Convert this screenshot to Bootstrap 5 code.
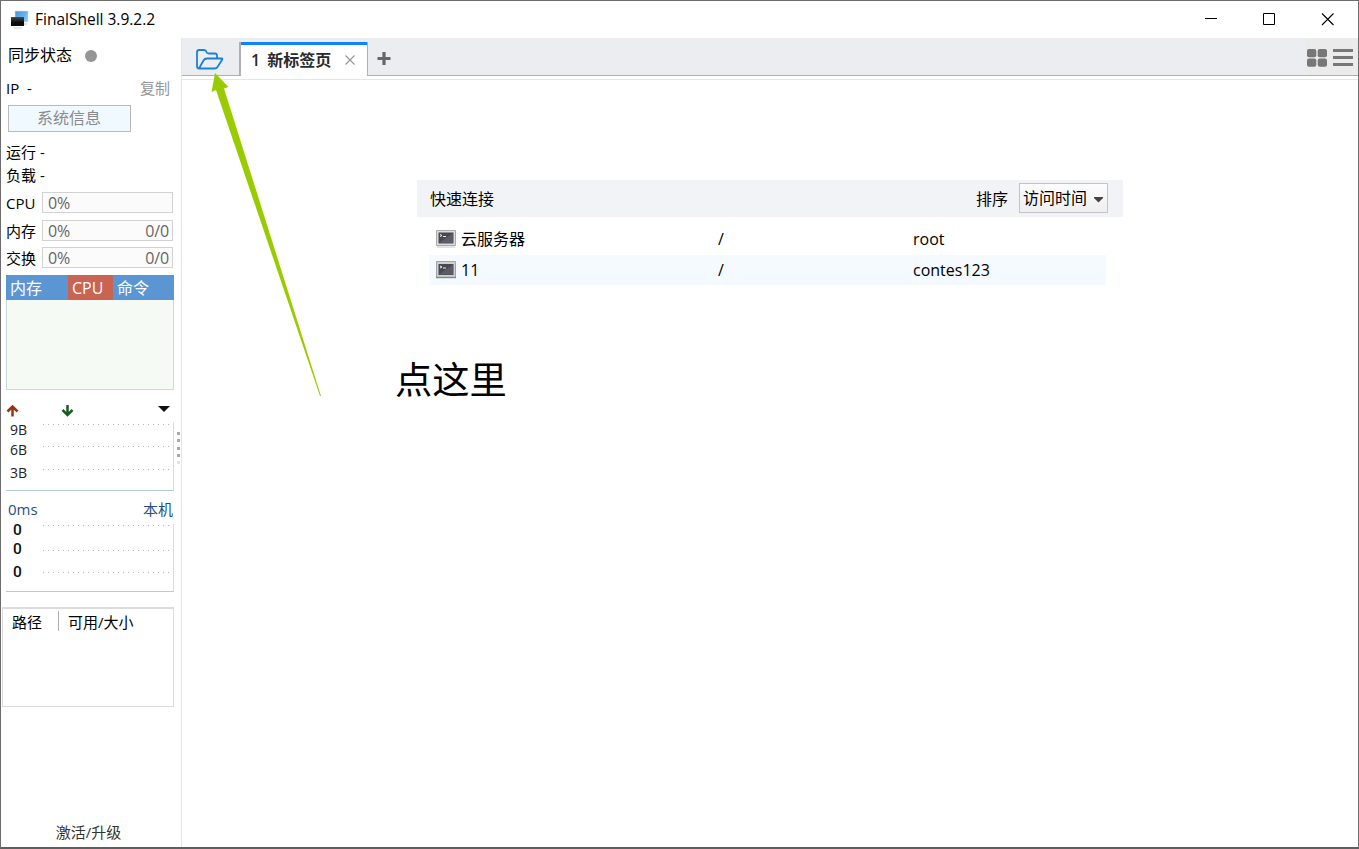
<!DOCTYPE html>
<html lang="zh-CN">
<head>
<meta charset="utf-8">
<title>FinalShell 3.9.2.2</title>
<link rel="stylesheet" href="https://cdn.jsdelivr.net/npm/bootstrap@5.3.0/dist/css/bootstrap.min.css">
<style>
body{height:849px;overflow:hidden;background:#fff;color:#000;font:16px/20px "Open Sans","Noto Sans CJK SC",sans-serif}
svg{display:block;flex:none}
.window{height:849px;border:1px solid #6e6c6d;border-bottom:2px solid #5f5f5f}
.titlebar{height:37px;padding-left:9px}
.app-name{font-size:15.5px;margin:-1px 0 0 6px}
.win-buttons{gap:45px;padding-right:24px}
.side{width:181px;flex:none;border-right:1px solid #e6e6e6;font-size:15px}
.sync{height:36px;padding:0 0 1px 7px;font-size:16px}
.sync-text{margin-top:-1px}
.sync-dot{width:12px;height:12px;background:#969696;margin-left:13px}
.ip-row{height:30px;padding:0 11px 2px 5px;font-size:15px}
.copy{color:#969696}
.sys-btn{width:123px;height:27px;margin:1px 0 9px 7px;padding:0 1px 0 0;border:1px solid #bababa;border-radius:0;background:#f0f9ff;color:#8a8a8a;font-size:16px;line-height:23px}
.info-line{height:23px;padding:0 0 2px 5px}
.meter-row{height:21px;padding-left:5px}
.meter-name{width:36px;flex:none;white-space:nowrap}
.meter{width:131px;height:21px;border:1px solid #d2d2d2;background:#fbfbfb;color:#666;padding:0 3px 0 5px;font-size:16px;line-height:20px;letter-spacing:-.1px}
.proc{width:168px;height:115px;margin:7px 0 0 5px;border:1px solid #c7dbe5;border-top:0;background:#f5faf5}
.proc-head{height:25px;margin:0 -1px;background:#5b95d3;color:#fff;font-size:16px;line-height:26px}
.proc-head>span{padding-left:4px}
.net-head{height:32px;padding:10px 11px 0 5px}
.chart{width:168px;height:69px;margin-left:5px;border-right:1px solid #d2dee3;border-bottom:1px solid #b5cdd6}
.chart-labels{width:36px;padding-left:4px;font-size:14px;color:#222;flex:none}
.ping-head{height:33px;padding:8px 8px 0 7px;color:#1f4f86;font-size:15px}
.ping .chart-labels{font-family:Roboto,sans-serif;font-weight:500;font-size:15.5px;color:#111}
.disk{width:172px;height:100px;margin:15px 0 0 1px;border:1px solid #dcdcdc;border-top-width:2px;padding:2px 0 0 9px;line-height:22px}
.disk-sep{width:1px;height:20px;background:#b0b0b0;margin:0 9px 0 16px}
.upgrade{height:25px;margin-right:5px;color:#333}
.grip{left:176px;top:427px}
.tabstrip{height:38px;background:#ecedf1;border-bottom:1px solid #b0b0b0}
.home-tab{width:57px;padding-left:13px;padding-top:5px}
.page-tab{width:129px;height:34px;margin-bottom:-1px;background:#fff;border:solid #b0b0b0;border-width:0 1px 0 1px;border-left-width:2px;box-shadow:inset 0 3px #0a84ff;padding:1px 12px 0 10px;font-weight:600;color:#2b2b2b;white-space:nowrap;word-spacing:3px}
.tools{width:52px;background:#ebebeb;padding:2px 5px 0 1px}
.workspace{margin-top:3px;border-top:1px solid #e6e6e6;padding:100px 0 0 235px}
.quick-head{width:706px;height:37px;background:#f2f3f7;padding:0 15px 1px 13px}
.sort-box{width:89px;height:30px;border:1px solid #c3c3c3;background:linear-gradient(#fcfcfc,#efefef);padding:0 4px 0 3px;margin-left:11px;line-height:29px}
.host{width:677px;margin-left:12px;padding-left:7px}
.host-name{width:262px;padding-left:5px}
.host-path{width:195px}
.arrow-note{left:204px;top:72px;pointer-events:none}
.note-text{left:394px;top:354px;font-size:37.3px;line-height:50px}
</style>
</head>
<body>
<div class="window position-relative d-flex flex-column">
 <header class="titlebar d-flex align-items-center">
  <svg width="19" height="20" viewBox="0 0 19 20"><defs><linearGradient id="scr" x2="1" y2="1"><stop stop-color="#3e93dc"/><stop offset="1" stop-color="#91cdf8"/></linearGradient><linearGradient id="blk" x2="0" y2="1"><stop stop-color="#454d55"/><stop offset=".6" stop-color="#0b0b0b"/></linearGradient></defs><path d="M5 1h13v11H5z" fill="url(#scr)" stroke="#d8e2ea" stroke-width=".6"/><path d="M12 13h5v2h-5z" fill="#ddd"/><path d="M1 7h13v9H1z" fill="url(#blk)"/><path d="M3 18h9" stroke="#d0d0d0"/></svg>
  <span class="app-name">FinalShell 3.9.2.2</span>
  <div class="win-buttons ms-auto d-flex align-items-center">
   <svg width="13" height="13" viewBox="0 0 13 13"><path d="M0 5.500h12" stroke="#000"/></svg>
   <svg width="13" height="13" viewBox="0 0 13 13"><path d="M.5.5h11v11H.5z" fill="none" stroke="#000"/></svg>
   <svg width="13" height="13" viewBox="0 0 13 13"><path d="M1 .5l11.500 11.500M12.500 .5l-11.500 11.500" stroke="#000" stroke-width="1.1"/></svg>
  </div>
 </header>
 <div class="d-flex flex-fill">
  <aside class="side d-flex flex-column">
   <div class="sync d-flex align-items-center"><span class="sync-text">同步状态</span><span class="sync-dot rounded-circle"></span></div>
   <div class="ip-row d-flex align-items-center"><span>IP&nbsp; -</span><span class="copy ms-auto">复制</span></div>
   <button class="sys-btn btn">系统信息</button>
   <div class="info-line d-flex align-items-center">运行 -</div>
   <div class="info-line d-flex align-items-center">负载 -</div>
   <div class="meter-row d-flex align-items-center" style="margin-top:5px"><span class="meter-name">CPU</span><div class="meter">0%</div></div>
   <div class="meter-row d-flex align-items-center" style="margin-top:7px"><span class="meter-name">内存</span><div class="meter d-flex justify-content-between"><span>0%</span><span>0/0</span></div></div>
   <div class="meter-row d-flex align-items-center" style="margin-top:6px"><span class="meter-name">交换</span><div class="meter d-flex justify-content-between"><span>0%</span><span>0/0</span></div></div>
   <div class="proc"><div class="proc-head d-flex"><span style="width:62px">内存</span><span style="width:45px;background:#c96452">CPU</span><span>命令</span></div></div>
   <div class="net-head d-flex justify-content-between">
    <div class="d-flex pt-1">
     <svg width="13" height="13" viewBox="0 0 13 13"><path d="M6.500 12.500V2.500M1.500 7.500l5-5 5 5" fill="none" stroke="#98330f" stroke-width="2.500"/></svg>
     <svg width="13" height="13" viewBox="0 0 13 13" style="margin-left:42px"><path d="M6.500 1v9.500M1.500 6l5 5 5-5" fill="none" stroke="#175c20" stroke-width="2.500"/></svg>
    </div>
    <svg width="12" height="6" viewBox="0 0 12 6" style="margin:6px 0 0 0"><path d="M0 0h12L6 6z" fill="#111"/></svg>
   </div>
   <div class="chart d-flex">
    <div class="chart-labels"><div style="height:18px;line-height:15px">9B</div><div style="height:21px">6B</div><div style="height:20px;line-height:23px">3B</div></div>
    <svg width="129" height="66"><path d="M1 2.500h127M1 24.500h127M1 47.500h127" stroke="#b5b5b5" stroke-dasharray="1 4"/></svg>
   </div>
   <div class="ping-head d-flex justify-content-between"><span>0ms</span><span>本机</span></div>
   <div class="chart ping d-flex" style="height:68px">
    <div class="chart-labels" style="padding-left:7px"><div style="height:16px;line-height:13px">0</div><div style="height:20px;line-height:19px">0</div><div style="height:20px;line-height:25px">0</div></div>
    <svg width="129" height="66"><path d="M1 1.500h127M1 26.500h127M1 48.500h127" stroke="#b5b5b5" stroke-dasharray="1 4"/></svg>
   </div>
   <div class="disk d-flex align-items-start"><span>路径</span><span class="disk-sep"></span><span>可用/大小</span></div>
   <div class="upgrade mt-auto text-center">激活/升级</div>
  </aside>
  <main class="flex-fill">
   <div class="tabstrip d-flex align-items-end">
    <div class="home-tab align-self-stretch d-flex align-items-center"><svg width="29" height="23" viewBox="0 0 29 23"><path d="M7 20.500H4Q2 20.500 2 18V4Q2 2 4 2H9Q11 2 11.500 4Q12 5.500 14 5.500H20Q22 5.500 22 7.500V10.500M4 20.500L8.500 12.500Q9.500 10.500 12 10.500H26.500Q28 10.500 27 12L22.500 19Q21.500 20.500 19.500 20.500H4" fill="none" stroke="#1b80d6" stroke-width="1.800" stroke-linejoin="round"/></svg></div>
    <div class="page-tab d-flex align-items-center"><span>1 新标签页</span><svg class="ms-auto" width="10" height="10" viewBox="0 0 10 10"><path d="M.5.5l9 9M9.500 .5l-9 9" stroke="#999" stroke-width="1.300"/></svg></div>
    <svg width="14" height="14" viewBox="0 0 14 14" style="margin:0 0 9px 9px"><path d="M7 0v13M.5 6.500h13" stroke="#666" stroke-width="3.200"/></svg>
    <div class="tools ms-auto align-self-stretch d-flex align-items-center justify-content-between">
     <svg width="20" height="18" viewBox="0 0 20 18" fill="#777"><rect width="9.300" height="8.300" rx="2"/><rect x="10.700" width="9.300" height="8.300" rx="2"/><rect y="9.500" width="9.300" height="8.300" rx="2"/><rect x="10.700" y="9.500" width="9.300" height="8.300" rx="2"/></svg>
     <svg width="20" height="17" viewBox="0 0 20 17"><path d="M0 1.500h20M0 8.500h20M0 15.500h20" stroke="#777" stroke-width="3"/></svg>
    </div>
   </div>
   <section class="workspace">
    <div class="quick-head d-flex align-items-center"><span style="padding-top:1px">快速连接</span><span class="ms-auto" style="padding-top:1px">排序</span>
     <div class="sort-box d-flex align-items-center justify-content-between"><span>访问时间</span><svg width="9" height="6" viewBox="0 0 9 6" style="margin-top:3px"><path d="M0 0h9v1L4.500 5.500 0 1z" fill="#444"/></svg></div></div>
    <div class="host d-flex align-items-center" style="height:31px;margin-top:7px;padding-bottom:2px">
     <svg width="20" height="18" viewBox="0 0 20 18"><path d="M.5.500h19v15H.5z" fill="#ddd" stroke="#aaa"/><path d="M2.500 2.500h15v11h-15z" fill="#484850"/><path d="M3 13L17 3v10z" fill="#5c5c68"/><path d="M4 4.500l2 1-2 1M7 6.500h3" stroke="#eee" fill="none"/><path d="M1 17h18" stroke="#e3e3e3" stroke-width="2"/></svg>
     <span class="host-name">云服务器</span><span class="host-path">/</span><span>root</span></div>
    <div class="host d-flex align-items-center" style="height:30px;background:#f4faff">
     <svg width="20" height="18" viewBox="0 0 20 18"><path d="M.5.500h19v16H.5z" fill="#d0d0d0" stroke="#a0a4a8"/><path d="M2.500 3h15v11h-15z" fill="#484850"/><path d="M3 13.500L17 3.500v10z" fill="#5c5c68"/><path d="M4 5l2 1-2 1M7 7h3" stroke="#eee" fill="none"/><path d="M0 16.500h20" stroke="#888" stroke-width="1.500"/></svg>
     <span class="host-name">11</span><span class="host-path">/</span><span>contes123</span></div>
   </section>
  </main>
 </div>
 <svg class="grip position-absolute" width="4" height="36" fill="#aaa"><path d="M0 4h3v3H0zM0 11h3v3H0zM0 19h3v3H0zM0 26h3v3H0z"/><path d="M0-3h3v3H0zM0 33h3v3H0z" fill="#e5e5e5"/></svg>
 <svg class="arrow-note position-absolute" width="120" height="330" viewBox="206 73 120 330"><path d="M216 73L229.500 87 225 88.500 322 396 321 396 217 90 212.500 92z" fill="#99cc00"/></svg>
 <div class="note-text position-absolute">点这里</div>
</div>
<script src="https://cdn.jsdelivr.net/npm/bootstrap@5.3.0/dist/js/bootstrap.bundle.min.js"></script>
</body>
</html>
